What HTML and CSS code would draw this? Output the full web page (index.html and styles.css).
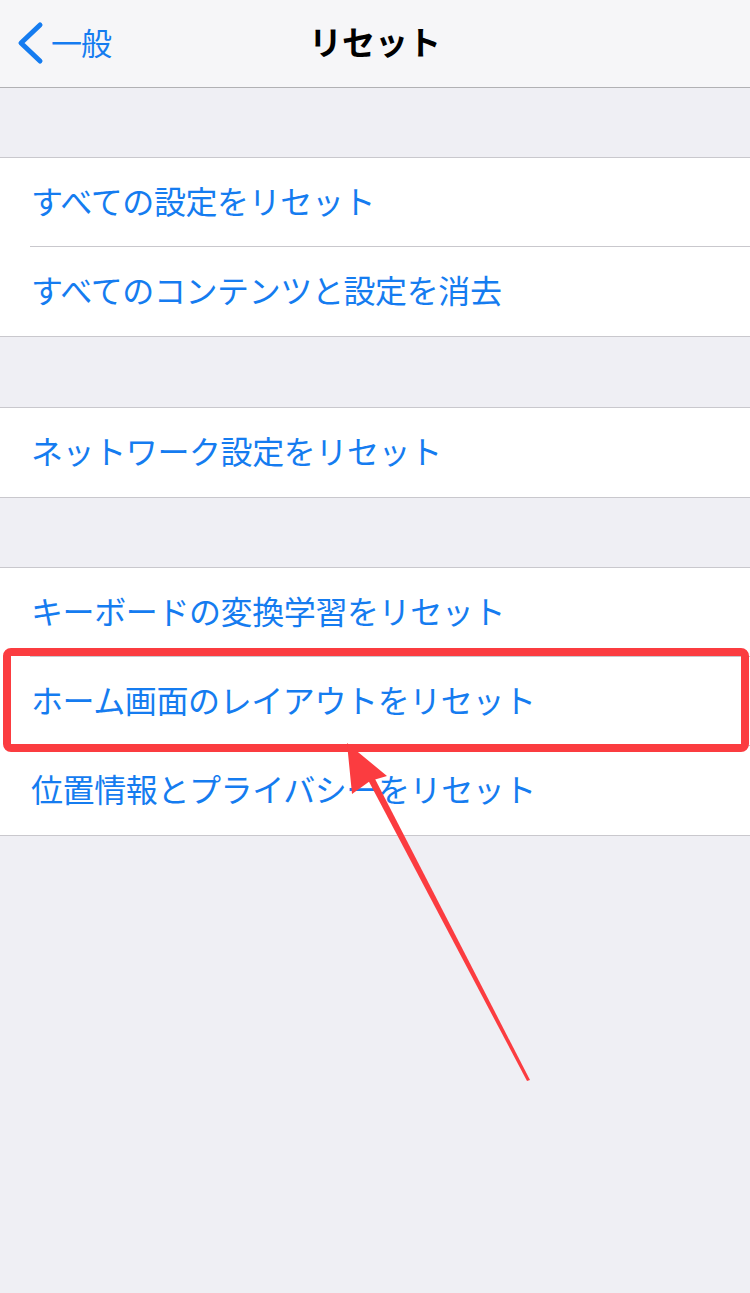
FILE: index.html
```html
<!DOCTYPE html>
<html lang="ja">
<head>
<meta charset="utf-8">
<title>リセット</title>
<link rel="stylesheet" href="styles.css">
</head>
<body>
<div class="page">
  <header class="navbar">
    <a class="back">
      <svg class="chevron" width="30" height="44" viewBox="0 0 30 44">
        <path d="M26 4 L7 22 L26 40" fill="none" stroke="#157cf0" stroke-width="5" stroke-linecap="round" stroke-linejoin="round"/>
      </svg>
      <span class="back-label">一般</span>
    </a>
    <h1 class="title">リセット</h1>
  </header>

  <section class="group first">
    <div class="row">すべての設定をリセット</div>
    <div class="row">すべてのコンテンツと設定を消去</div>
  </section>

  <section class="group">
    <div class="row">ネットワーク設定をリセット</div>
  </section>

  <section class="group third">
    <div class="row">キーボードの変換学習をリセット</div>
    <div class="row">ホーム画面のレイアウトをリセット</div>
    <div class="row">位置情報とプライバシーをリセット</div>
  </section>

  <svg class="annotation" width="750" height="1293" viewBox="0 0 750 1293">
    <rect x="7" y="652" width="738" height="96" rx="4" ry="4" fill="none" stroke="#fb3c40" stroke-width="8"/>
    <polygon points="367,778 373,775 530,1080 527,1081" fill="#fb3c40"/>
    <polygon points="347,743 387,776 370,781 352,794" fill="#fb3c40"/>
  </svg>
</div>
</body>
</html>
```
FILE: styles.css
```css
* { box-sizing: border-box; }
html, body {
  margin: 0;
  padding: 0;
  background: #efeff4;
}
body {
  font-family: "Noto Sans CJK JP", "Noto Sans", sans-serif;
  min-height: 1293px;
}
.page {
  position: relative;
  width: 750px;
  min-height: 1293px;
  background: #efeff4;
}
.navbar {
  position: relative;
  height: 88px;
  background: #f6f6f8;
  border-bottom: 1px solid #b1b1b4;
  display: flex;
  align-items: center;
  justify-content: center;
}
.back {
  position: absolute;
  left: 14px;
  top: 21px;
  display: flex;
  align-items: center;
  color: #157cf0;
}
.chevron { display: block; }
.back-label {
  font-size: 31px;
  line-height: 44px;
  margin-left: 7px;
  margin-top: -3px;
  letter-spacing: -1px;
}
.title {
  margin: 0;
  font-size: 33px;
  font-weight: 700;
  color: #000;
  letter-spacing: 0;
  line-height: 1;
  margin-top: -4px;
}
.group {
  margin-top: 69px;
  background: #fff;
  border-top: 1px solid #c9c8cd;
  border-bottom: 1px solid #c9c8cd;
}
.group + .group { margin-top: 70px; }
.group.third { margin-top: 69px; }
.row {
  height: 89px;
  margin-left: 30px;
  padding-left: 1px;
  padding-bottom: 5px;
  display: flex;
  align-items: center;
  font-size: 32px;
  color: #157cf0;
  letter-spacing: -0.4px;
  border-bottom: 1px solid #c9c8cd;
}
.row:last-child { border-bottom: none; height: 89px; }
.annotation {
  position: absolute;
  left: 0;
  top: 0;
  pointer-events: none;
}
```
